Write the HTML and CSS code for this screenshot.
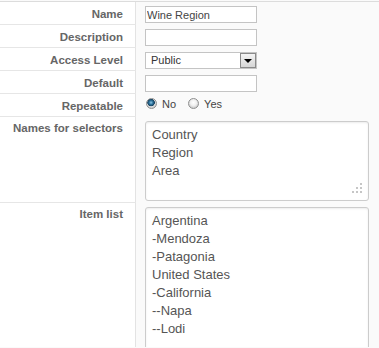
FILE: index.html
```html
<!DOCTYPE html>
<html lang="en">
<head>
    <meta charset="UTF-8">
    <meta name="viewport" content="width=device-width, initial-scale=1.0">
    <title>Field Settings</title>
    <link rel="stylesheet" href="styles.css">
</head>
<body>

    <div class="form">
        <div class="row">
            <label class="key" for="name">Name</label>
            <div class="field"><input type="text" id="name" class="text" value="Wine Region"></div>
        </div>
        <div class="row">
            <label class="key" for="description">Description</label>
            <div class="field"><input type="text" id="description" class="text"></div>
        </div>
        <div class="row">
            <label class="key">Access Level</label>
            <div class="field">
                <div class="select">
                    <span class="select-value">Public</span>
                    <span class="select-arrow"></span>
                </div>
            </div>
        </div>
        <div class="row">
            <label class="key" for="default">Default</label>
            <div class="field"><input type="text" id="default" class="text"></div>
        </div>
        <div class="row">
            <label class="key">Repeatable</label>
            <div class="field">
                <div class="radios">
                    <label class="radio"><input type="radio" name="repeatable" checked> No</label>
                    <label class="radio"><input type="radio" name="repeatable"> Yes</label>
                </div>
            </div>
        </div>
        <div class="row tall">
            <label class="key" for="selectors">Names for selectors</label>
            <div class="field">
                <div class="area">
                    <textarea id="selectors" class="names">Country
Region
Area</textarea>
                    <svg class="grip" width="11" height="11" viewBox="0 0 11 11">
                        <rect x="8" y="0" width="2" height="2"/>
                        <rect x="8" y="4" width="2" height="2"/>
                        <rect x="4" y="4" width="2" height="2"/>
                        <rect x="8" y="8" width="2" height="2"/>
                        <rect x="4" y="8" width="2" height="2"/>
                        <rect x="0" y="8" width="2" height="2"/>
                    </svg>
                </div>
            </div>
        </div>
        <div class="row tall">
            <label class="key" for="items">Item list</label>
            <div class="field">
                <div class="area">
                    <textarea id="items" class="items">Argentina
-Mendoza
-Patagonia
United States
-California
--Napa
--Lodi</textarea>
                </div>
            </div>
        </div>
    </div>

</body>
</html>
```

FILE: styles.css
```css
html, body {
    margin: 0;
    overflow: hidden;
}
body {
    font-family: "Liberation Sans", Arial, sans-serif;
    background-color: #fafafa;
}
.form {
    margin-top: 1px;
    border-top: 1px solid #dcdcdc;
}
.row {
    display: flex;
}
.key {
    box-sizing: border-box;
    flex: 0 0 136px;
    height: 23px;
    padding: 2px 12px 0 0;
    line-height: 21px;
    text-align: right;
    font-size: 11.5px;
    font-weight: bold;
    color: #666;
    background-color: #fff;
    border-right: 1px solid #e3e3e3;
    border-bottom: 1px solid #e6e6e6;
}
.tall .key {
    height: 86px;
    padding-top: 1px;
}
.tall:last-child .key {
    height: 144px;
    border-bottom: none;
}
.field {
    flex: 1;
    padding: 4px 0 0 9px;
}
.text {
    display: block;
    box-sizing: border-box;
    width: 112px;
    height: 17px;
    margin: 0;
    padding: 0 1px;
    border: 1px solid #c4c4c4;
    background-color: #fff;
    font-family: "Liberation Sans", Arial, sans-serif;
    font-size: 11px;
    color: #444;
}
.select {
    display: flex;
    box-sizing: border-box;
    width: 112px;
    height: 17px;
    border: 1px solid #c4c4c4;
    background-color: #fff;
}
.select-value {
    flex: 1;
    padding-left: 5px;
    font-size: 11px;
    line-height: 15px;
    color: #333;
}
.select-arrow {
    box-sizing: border-box;
    position: relative;
    width: 16px;
    height: 15px;
    border: 1px solid #8a8a8a;
    background: linear-gradient(#f4f4f4, #d6d6d6);
}
.select-arrow::after {
    content: "";
    position: absolute;
    left: 3px;
    top: 5px;
    border-left: 4px solid transparent;
    border-right: 4px solid transparent;
    border-top: 4px solid #000;
}
.radios {
    display: flex;
    align-items: center;
    gap: 12px;
    height: 11px;
    margin-left: 1px;
}
.radio {
    display: flex;
    align-items: center;
    gap: 5px;
    font-size: 11px;
    color: #444;
}
.radio input {
    appearance: none;
    box-sizing: border-box;
    width: 11px;
    height: 11px;
    margin: 0;
    border: 1px solid #8e8f8f;
    border-radius: 50%;
    background: radial-gradient(circle at 50% 40%, #fff 0, #f0f0f0 3px, #d2d2d2 5px);
}
.radio input:checked {
    background: radial-gradient(circle at 45% 40%, #8fc7e6 0, #2a6f98 2px, #163f5c 3.5px, #e6e6e6 4px, #cfcfcf 5px);
}
.area {
    position: relative;
    width: 224px;
}
textarea {
    display: block;
    box-sizing: border-box;
    width: 224px;
    margin: 0;
    padding: 4px 6px;
    border: 1px solid #ccc;
    border-radius: 3px;
    box-shadow: inset 0 1px 2px rgba(0, 0, 0, 0.08);
    background-color: #fff;
    font-family: "Liberation Sans", Arial, sans-serif;
    font-size: 13px;
    line-height: 18px;
    color: #555;
    resize: none;
    overflow: hidden;
}
.names {
    height: 80px;
}
.items {
    height: 150px;
    border-bottom-left-radius: 0;
    border-bottom-right-radius: 0;
}
.tall:last-child .field {
    height: 140px;
    overflow: hidden;
}
.grip {
    position: absolute;
    right: 6px;
    bottom: 7px;
    fill: #c6c6c6;
}
```
